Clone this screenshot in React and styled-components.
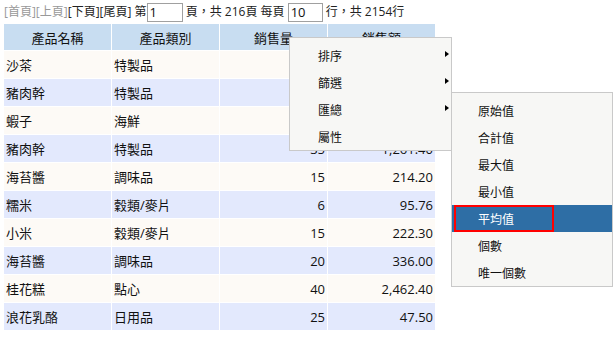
import React from "react";
import styled, { createGlobalStyle } from "styled-components";

const rows = [
	["沙茶", "特製品", "20", "442.00"],
	["豬肉幹", "特製品", "12", "477.00"],
	["蝦子", "海鮮", "10", "73.50"],
	["豬肉幹", "特製品", "35", "1,261.40"],
	["海苔醬", "調味品", "15", "214.20"],
	["糯米", "穀類/麥片", "6", "95.76"],
	["小米", "穀類/麥片", "15", "222.30"],
	["海苔醬", "調味品", "20", "336.00"],
	["桂花糕", "點心", "40", "2,462.40"],
	["浪花乳酪", "日用品", "25", "47.50"],
];

const menuItems = [
	{ label: "排序", sub: true },
	{ label: "篩選", sub: true },
	{ label: "匯總", sub: true },
	{ label: "屬性", sub: false },
];

const subItems = ["原始值", "合計值", "最大值", "最小值", "平均值", "個數", "唯一個數"];

const App = () => {
	return (
		<>
			<GlobalStyle />
			<StPage>
				<StToolbar>
					<StPager $disabled>[首頁][上頁]</StPager>
					<StPager>[下頁][尾頁]</StPager>
					<span> 第</span>
					<StPageInput defaultValue="1" $width={36} />
					<span> 頁，共 216頁 每頁 </span>
					<StPageInput defaultValue="10" $width={35} />
					<span> 行，共 2154行</span>
				</StToolbar>
				<StTable>
					<thead>
						<tr>
							<StHead>產品名稱</StHead>
							<StHead>產品類別</StHead>
							<StHead>銷售量</StHead>
							<StHead>銷售額</StHead>
						</tr>
					</thead>
					<tbody>
						{rows.map((r, i) => (
							<StRow key={i} $even={i % 2 === 1}>
								<StCell>{r[0]}</StCell>
								<StCell>{r[1]}</StCell>
								<StCell $num>{r[2]}</StCell>
								<StCell $num>{r[3]}</StCell>
							</StRow>
						))}
					</tbody>
				</StTable>

				<StMenu>
					{menuItems.map((m) => (
						<StMenuItem key={m.label}>
							{m.label}
							{m.sub && <StArrow />}
						</StMenuItem>
					))}
				</StMenu>

				<StSubMenu>
					{subItems.map((s) => (
						<StSubItem key={s} $active={s === "平均值"}>
							{s}
							{s === "平均值" && <StMark />}
						</StSubItem>
					))}
				</StSubMenu>
			</StPage>
		</>
	);
};

export default App;

const GlobalStyle = createGlobalStyle`
	body {
		margin: 0;
		background: #fff;
		font-family: "Open Sans", "Noto Sans CJK TC", sans-serif;
		font-size: 13px;
		color: #222;
	}
`;

const StPage = styled.div`
	position: relative;
	width: 616px;
	height: 337px;
	padding: 0 4px;
	box-sizing: border-box;
	overflow: hidden;
`;

const StToolbar = styled.div`
	display: flex;
	align-items: center;
	height: 24px;
	white-space: pre;
	line-height: 16px;
	font-size: 12px;
	color: #222;
`;

const StPager = styled.span`
	color: ${(p) => (p.$disabled ? "#999" : "#222")};
`;

const StPageInput = styled.input`
	width: ${(p) => p.$width}px;
	height: 19px;
	box-sizing: border-box;
	border: 1px solid #a0a0a0;
	padding: 0 2px;
	font: inherit;
	font-size: 13px;
	color: #111;
	outline: none;
`;

const StTable = styled.table`
	border-collapse: separate;
	border-spacing: 0;
	width: 432px;
	table-layout: fixed;
	margin-left: -1px;
`;

const StHead = styled.th`
	height: 27px;
	box-sizing: border-box;
	padding: 0;
	background: #c8ddf1;
	font-weight: normal;
	font-size: 13px;
	text-align: center;
	border-left: 1px solid #fff;
	border-bottom: 1px solid #fff;
	color: #111;
`;

const StRow = styled.tr`
	background: ${(p) => (p.$even ? "#e3e9fd" : "#fdfaf6")};
`;

const StCell = styled.td`
	height: 28px;
	padding: 0 2px;
	box-sizing: border-box;
	border-left: 1px solid #fff;
	border-bottom: 1px solid #fff;
	text-align: ${(p) => (p.$num ? "right" : "left")};
	color: #111;
	white-space: nowrap;
`;

const StMenu = styled.div`
	position: absolute;
	left: 289px;
	top: 37px;
	width: 163px;
	box-sizing: border-box;
	padding: 4px 0 0;
	background: #f7f7f5;
	border: 1px solid #c9c9c9;
	font-size: 12px;
	color: #111;
`;

const StMenuItem = styled.div`
	position: relative;
	height: 27px;
	display: flex;
	align-items: center;
	padding-left: 28px;
`;

const StArrow = styled.span`
	position: absolute;
	right: 2px;
	top: 9px;
	width: 0;
	height: 0;
	border-top: 3.5px solid transparent;
	border-bottom: 3.5px solid transparent;
	border-left: 4px solid #000;
`;

const StSubMenu = styled.div`
	position: absolute;
	left: 451px;
	top: 92px;
	width: 162px;
	box-sizing: border-box;
	padding: 4px 0 0;
	background: #f7f7f5;
	border: 1px solid #c9c9c9;
	font-size: 12px;
	color: #111;
`;

const StSubItem = styled.div`
	position: relative;
	height: 27px;
	display: flex;
	align-items: center;
	padding-left: 26px;
	background: ${(p) => (p.$active ? "#2e6ea5" : "transparent")};
	color: ${(p) => (p.$active ? "#fff" : "#111")};
`;

const StMark = styled.span`
	position: absolute;
	left: 2px;
	top: 0;
	width: 100px;
	height: 27px;
	box-sizing: border-box;
	border: 2px solid #f00;
`;
